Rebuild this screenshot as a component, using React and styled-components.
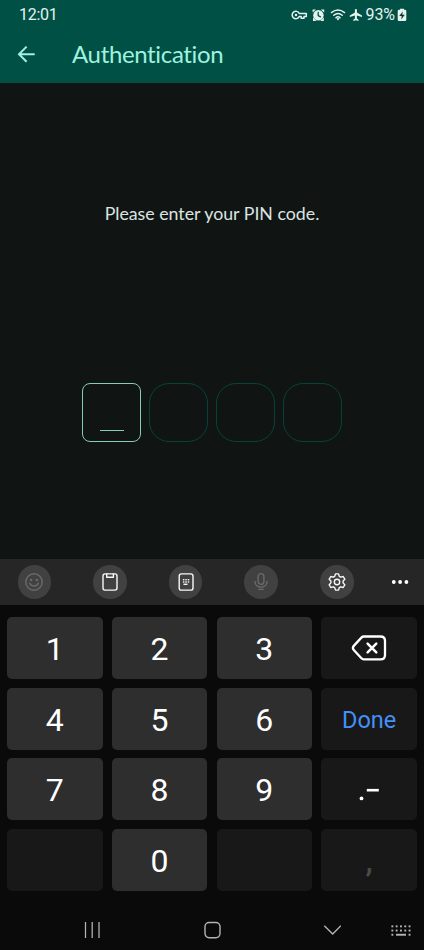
import React from "react";
import styled, { createGlobalStyle, css } from "styled-components";

const GlobalStyle = createGlobalStyle`
  *, *::before, *::after { box-sizing: border-box; }
  body { margin: 0; background: #0a0a0a; }
  button { border: 0; padding: 0; margin: 0; background: none; color: inherit; font: inherit; }
`;

const Screen = styled.div`
  width: 424px;
  height: 950px;
  display: flex;
  flex-direction: column;
  overflow: hidden;
  background: #0a0a0a;
  font-family: Roboto, sans-serif;
`;

const Header = styled.header`
  height: 83px;
  flex: none;
  background: #005045;
`;

const StatusBar = styled.div`
  height: 28px;
  padding: 1px 17.5px 0 19px;
  display: flex;
  align-items: center;
  justify-content: space-between;
  color: #e4f2ee;
  font-size: 16px;
  line-height: 28px;
`;

const Clock = styled.span`
  letter-spacing: -0.25px;
`;

const StatusIcons = styled.div`
  display: flex;
  align-items: center;

  svg { display: block; flex: none; }
`;

const Percent = styled.span`
  width: 31px;
  margin-left: 3px;
  letter-spacing: -0.1px;
  white-space: nowrap;
`;

const TitleBar = styled.div`
  height: 52px;
  padding-left: 16px;
  display: flex;
  align-items: center;
  color: #9ff2df;
`;

const BackButton = styled.button`
  width: 56px;
  height: 24px;
  display: flex;
  align-items: center;
`;

const Title = styled.h1`
  margin: 0;
  font: 400 24px/32px Lato, sans-serif;
  font-variant-ligatures: none;
  letter-spacing: -0.35px;
`;

const Content = styled.main`
  height: 476px;
  flex: none;
  display: flex;
  flex-direction: column;
  align-items: center;
  background: #101514;
`;

const Prompt = styled.p`
  margin: 118px 0 0;
  color: #dbe4e0;
  font: 400 17.75px/24px Lato, sans-serif;
  letter-spacing: 0;
  white-space: nowrap;
`;

const PinRow = styled.div`
  margin-top: 158px;
  display: flex;
  gap: 8px;
`;

const PinCell = styled.div`
  width: 59px;
  height: 59px;
  display: flex;
  align-items: flex-end;
  justify-content: center;
  padding-bottom: 10px;
  border: 1px solid ${(p) => (p.$active ? "#84cdb9" : "#064238")};
  border-radius: ${(p) => (p.$active ? 8 : 20)}px;
`;

const Cursor = styled.span`
  width: 24px;
  height: 1px;
  background: #84cdb9;
`;

const Toolbar = styled.div`
  height: 46px;
  flex: none;
  padding: 0 14px 0 17.5px;
  display: flex;
  align-items: center;
  justify-content: space-between;
  background: #262626;
`;

const ToolGroup = styled.div`
  width: 336px;
  display: flex;
  justify-content: space-between;
`;

const ToolButton = styled.button`
  width: 33.5px;
  height: 33.5px;
  display: grid;
  place-items: center;
  border-radius: 50%;
  background: #414141;
  color: ${(p) => (p.$dim ? "#6a6a6a" : "#f8f8f8")};
`;

const MoreButton = styled.button`
  width: 20px;
  height: 20px;
  display: grid;
  place-items: center;
  color: #fff;
`;

const Keypad = styled.div`
  flex: none;
  height: 305px;
  padding: 12px 7px 0;
  display: grid;
  grid-template-columns: repeat(4, 95.6px);
  grid-auto-rows: 62.2px;
  column-gap: 9.2px;
  row-gap: 8.4px;
  align-content: start;
`;

const Key = styled.button`
  display: flex;
  align-items: center;
  justify-content: center;
  padding-top: 2px;
  border-radius: 5px;
  background: #2e2e2e;
  color: #fff;
  font: 400 32px/38px Roboto, sans-serif;

  ${(p) => p.$kind && css`
    background: #181818;
  `}
  ${(p) => p.$kind === "done" && css`
    color: #4290f8;
    font-size: 23.5px;
  `}
  ${(p) => p.$kind === "comma" && css`
    color: #4a4a4a;
    font-weight: 500;
  `}
  ${(p) => p.$kind === "icon" && css`
    padding-top: 0;
  `}
`;

const NavBar = styled.nav`
  height: 40px;
  flex: none;
  padding: 0 12px 0 82px;
  display: flex;
  align-items: center;
  color: #b4b4b4;
`;

const NavButton = styled.button`
  width: 20px;
  height: 24px;
  display: grid;
  place-items: center;
  margin-left: ${(p) => p.$gap || 0}px;
`;

const Svg = ({ w, h, children, ...rest }) => (
  <svg width={w} height={h} viewBox={`0 0 ${w} ${h}`} fill="none" stroke="currentColor"
    strokeLinecap="round" strokeLinejoin="round" {...rest}>
    {children}
  </svg>
);

const StatusGlyphs = () => (
  <Svg w={72} h={20} stroke="none" fill="currentColor">
    <g fill="none" stroke="currentColor" strokeWidth="1.5">
      <path d="M8.2 8.4A3.7 3.7 0 1 0 8.2 11.6H10.2V13.2H13V11.6H15.3V8.4Z" />
    </g>
    <circle cx="5" cy="10" r="1.25" />
    <circle cx="27.4" cy="10.3" r="5.2" />
    <path d="M21.6 7.6V4.6H25ZM33.2 7.6V4.6H29.8ZM22 15.9V12.3L25.4 15.9ZM32.8 15.9V12.3L29.4 15.9Z" />
    <path d="M27.2 7.4V10.7L29.5 11.8" fill="none" stroke="#005045" strokeWidth="1.3" />
    <g fill="none" stroke="currentColor" strokeWidth="1.45">
      <path d="M40.4 7.6Q47 2.3 53.6 7.6M42.7 10.3Q47 6.8 51.3 10.3M44.9 12.7Q47 11 49.1 12.7" />
    </g>
    <path d="M45.3 13.6Q47 12.5 48.7 13.6L47 15.4Z" />
    <path d="M71 12V10.6L65.9 7.6V4.9C65.9 3.6 63.9 3.6 63.9 4.9V7.6L58.8 10.6V12L63.9 10.6V13.6L62.3 14.7V15.9L64.9 15.2L67.5 15.9V14.7L65.9 13.6V10.6Z" />
  </Svg>
);

const BatteryIcon = () => (
  <Svg w={10} h={14} stroke="none">
    <path d="M3 1.8V.7H7V1.8H8Q9.3 1.8 9.3 3.1V11.7Q9.3 13 8 13H2Q.7 13 .7 11.7V3.1Q.7 1.8 2 1.8Z" fill="currentColor" />
    <path d="M5.8 3.5L2.2 8H4.7L4.2 11.4L7.8 6.7H5.3Z" fill="#10332c" />
  </Svg>
);

const ArrowIcon = () => (
  <Svg w={20} h={20} strokeWidth="2" strokeLinecap="butt" strokeLinejoin="miter">
    <path d="M18.7 10.2H3M10.6 2.6L3 10.2L10.6 17.8" />
  </Svg>
);

const SmileIcon = () => (
  <Svg w={20} h={20} strokeWidth="1.4">
    <circle cx="10" cy="10" r="8.2" />
    <path d="M5.8 11.2Q6.8 14 10 14T14.2 11.2" />
    <circle cx="7.1" cy="8" r=".65" fill="currentColor" />
    <circle cx="12.9" cy="8" r=".65" fill="currentColor" />
  </Svg>
);

const ClipboardIcon = () => (
  <Svg w={20} h={20} strokeWidth="1.4">
    <rect x="3" y="1.9" width="14" height="16.2" rx="2" />
    <path d="M6.7 2V5.3H13.4V2" />
  </Svg>
);

const KeypadIcon = () => (
  <Svg w={20} h={20} strokeWidth="1.4">
    <rect x="3.2" y="1.9" width="13.8" height="16.2" rx="2.2" />
    <g stroke="none" fill="currentColor">
      {[7, 9.3].map((y) => [6.9, 9.3, 11.7].map((x) => (
        <rect key={`${x}-${y}`} x={x} y={y} width="1.5" height="1.4" />
      )))}
      <rect x="7.5" y="11.6" width="4" height="1.4" />
    </g>
  </Svg>
);

const MicIcon = () => (
  <Svg w={20} h={20} strokeWidth="1.4">
    <rect x="7.1" y="1.6" width="5.8" height="10.7" rx="2.9" />
    <path d="M4 9.5C4 17 16 17 16 9.5M7.8 17.4H12.2" />
  </Svg>
);

const GearIcon = () => (
  <Svg w={20} h={20} strokeWidth="1.4">
    <path d="M8.5 1.9H11.5L12.3 4.3L13.8 5.2L16.2 4.5L17.8 7.2L16.1 9V10.9L17.8 12.8L16.2 15.5L13.8 14.8L12.3 15.7L11.5 18.1H8.5L7.7 15.7L6.2 14.8L3.8 15.5L2.2 12.8L3.9 10.9V9L2.2 7.2L3.8 4.5L6.2 5.2L7.7 4.3Z" />
    <circle cx="10" cy="10" r="2.7" />
  </Svg>
);

const MoreIcon = () => (
  <Svg w={18} h={6} stroke="none" fill="currentColor">
    <circle cx="2.8" cy="3" r="1.9" />
    <circle cx="9.1" cy="3" r="1.9" />
    <circle cx="15.4" cy="3" r="1.9" />
  </Svg>
);

const DeleteIcon = () => (
  <Svg w={36} h={28} strokeWidth="2.3">
    <path d="M12.8 2.5H29.5Q34 2.5 34 6.9V20.9Q34 25.3 29.5 25.3H12.8Q11.4 25.3 10.4 24.2L3 16.2Q.8 13.9 3 11.6L10.4 3.6Q11.4 2.5 12.8 2.5Z" />
    <path d="M16.6 9.6L25.3 18.3M25.3 9.6L16.6 18.3" strokeWidth="2.5" />
  </Svg>
);

const PunctuationMark = () => (
  <Svg w={20} h={26} stroke="none" fill="currentColor">
    <circle cx="2.5" cy="22.4" r="1.9" />
    <rect x="7.8" y="12.9" width="12" height="2.6" />
  </Svg>
);

const RecentsIcon = () => (
  <Svg w={18} h={18} strokeWidth="1.25" strokeLinecap="butt">
    <path d="M2.5 1V17M9.2 1V17M16 1V17" />
  </Svg>
);

const HomeIcon = () => (
  <Svg w={18} h={18} strokeWidth="1.4">
    <rect x="2" y="1.5" width="15" height="15.2" rx="4.1" />
  </Svg>
);

const DownIcon = () => (
  <Svg w={18} h={18} strokeWidth="1.4" strokeLinecap="butt" strokeLinejoin="miter">
    <path d="M1.3 4.7L9.7 13L17.9 4.7" />
  </Svg>
);

const KeyboardIcon = () => (
  <Svg w={20} h={14} stroke="none" fill="currentColor">
    {[2.4, 6.6, 10.8].map((y, row) => [0.4, 4.7, 9, 13.3, 17.6].map((x, col) =>
      row === 2 && col > 0 && col < 4 ? null : (
        <rect key={`${x}-${y}`} x={x} y={y} width="1.9" height="1.9" />
      )))}
    <rect x="5" y="10.8" width="10" height="1.9" />
  </Svg>
);

const TOOLS = [
  { label: "Emoji", icon: <SmileIcon />, dim: true },
  { label: "Clipboard", icon: <ClipboardIcon /> },
  { label: "Keyboard modes", icon: <KeypadIcon /> },
  { label: "Voice input", icon: <MicIcon />, dim: true },
  { label: "Settings", icon: <GearIcon /> },
];

const KEYS = [
  { content: "1" }, { content: "2" }, { content: "3" },
  { content: <DeleteIcon />, kind: "icon", label: "Delete" },
  { content: "4" }, { content: "5" }, { content: "6" },
  { content: "Done", kind: "done" },
  { content: "7" }, { content: "8" }, { content: "9" },
  { content: <PunctuationMark />, kind: "icon", label: "Period and dash" },
  { kind: "blank" }, { content: "0" }, { kind: "blank" },
  { content: ",", kind: "comma" },
];

export default function App() {
  return (
    <>
      <GlobalStyle />
      <Screen>
        <Header>
          <StatusBar>
            <Clock>12:01</Clock>
            <StatusIcons>
              <StatusGlyphs />
              <Percent>93%</Percent>
              <BatteryIcon />
            </StatusIcons>
          </StatusBar>
          <TitleBar>
            <BackButton aria-label="Back"><ArrowIcon /></BackButton>
            <Title>Authentication</Title>
          </TitleBar>
        </Header>
        <Content>
          <Prompt>Please enter your PIN code.</Prompt>
          <PinRow>
            <PinCell $active><Cursor /></PinCell>
            <PinCell />
            <PinCell />
            <PinCell />
          </PinRow>
        </Content>
        <Toolbar>
          <ToolGroup>
            {TOOLS.map((t) => (
              <ToolButton key={t.label} aria-label={t.label} $dim={t.dim}>{t.icon}</ToolButton>
            ))}
          </ToolGroup>
          <MoreButton aria-label="More"><MoreIcon /></MoreButton>
        </Toolbar>
        <Keypad>
          {KEYS.map((k, i) => (
            <Key key={i} $kind={k.kind} aria-label={k.label}>{k.content}</Key>
          ))}
        </Keypad>
        <NavBar>
          <NavButton aria-label="Recents"><RecentsIcon /></NavButton>
          <NavButton $gap={100} aria-label="Home"><HomeIcon /></NavButton>
          <NavButton $gap={100} aria-label="Hide keyboard"><DownIcon /></NavButton>
          <NavButton $gap={49} aria-label="Switch keyboard"><KeyboardIcon /></NavButton>
        </NavBar>
      </Screen>
    </>
  );
}
